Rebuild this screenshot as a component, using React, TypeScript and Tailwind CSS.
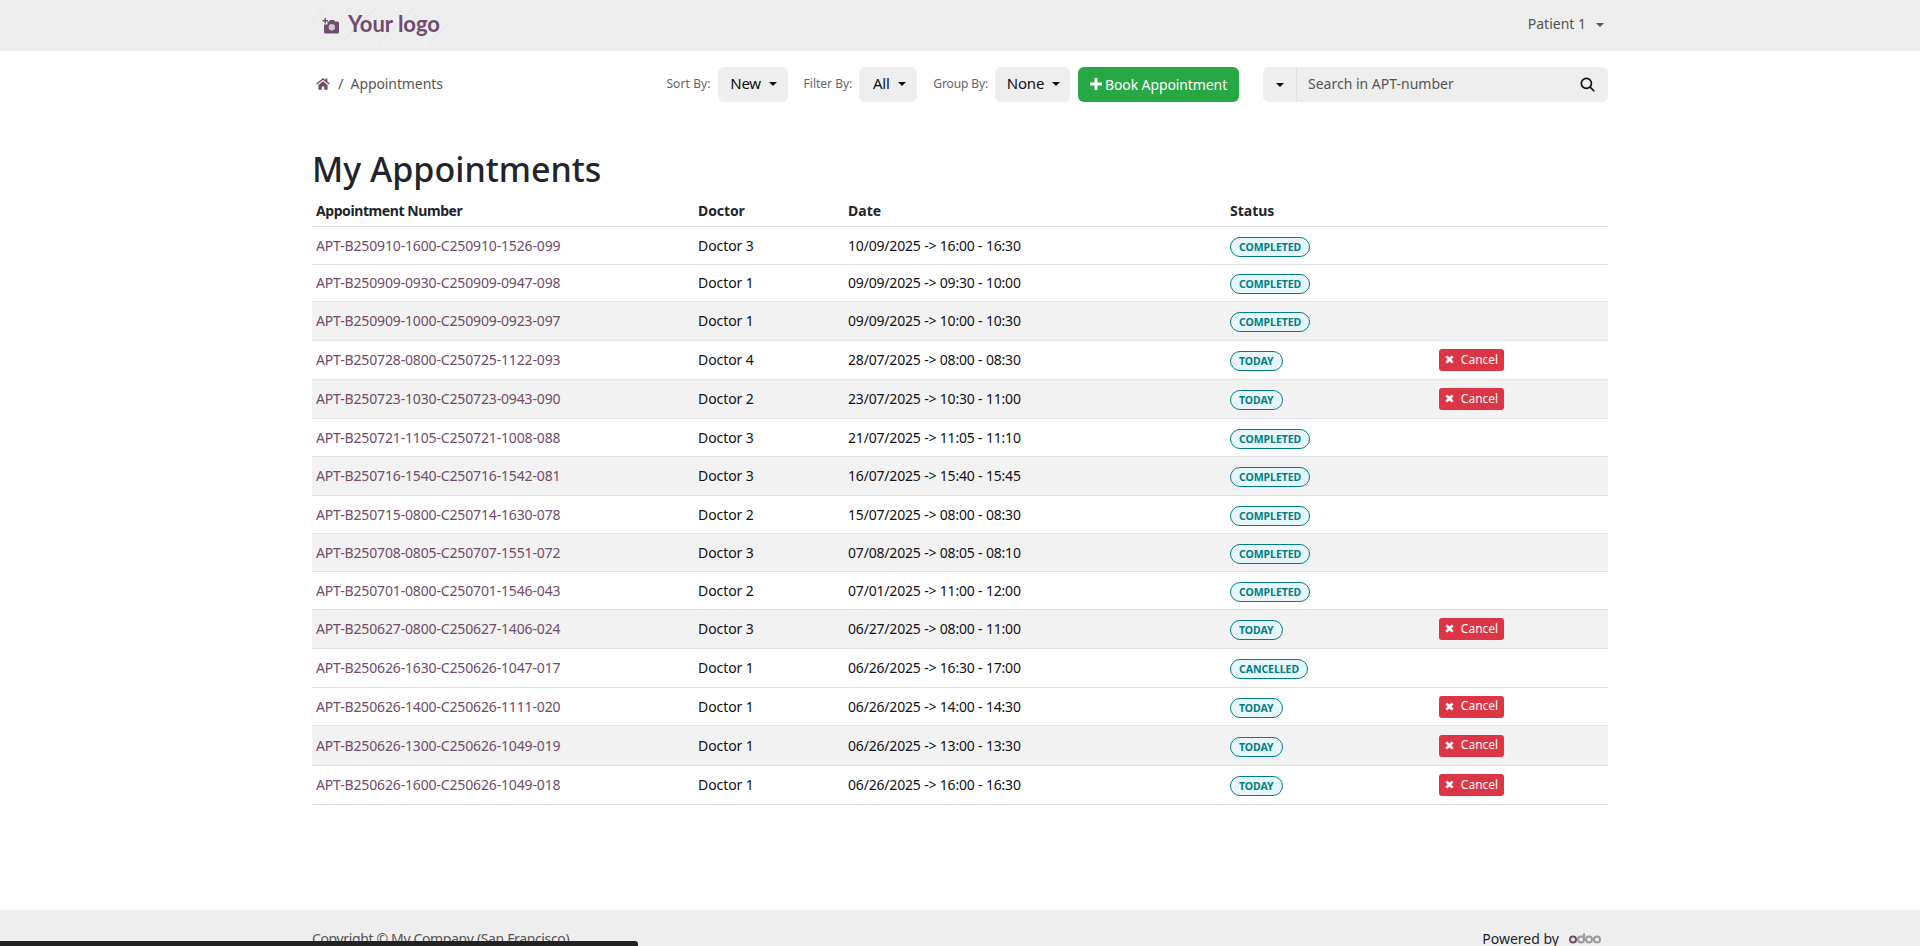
const rows = [
  { id: "APT-B250910-1600-C250910-1526-099", doctor: "Doctor 3", date: "10/09/2025 -> 16:00 - 16:30", status: "COMPLETED", h: 38 },
  { id: "APT-B250909-0930-C250909-0947-098", doctor: "Doctor 1", date: "09/09/2025 -> 09:30 - 10:00", status: "COMPLETED", h: 37 },
  { id: "APT-B250909-1000-C250909-0923-097", doctor: "Doctor 1", date: "09/09/2025 -> 10:00 - 10:30", status: "COMPLETED", h: 39, gray: true },
  { id: "APT-B250728-0800-C250725-1122-093", doctor: "Doctor 4", date: "28/07/2025 -> 08:00 - 08:30", status: "TODAY", h: 39 },
  { id: "APT-B250723-1030-C250723-0943-090", doctor: "Doctor 2", date: "23/07/2025 -> 10:30 - 11:00", status: "TODAY", h: 39, gray: true },
  { id: "APT-B250721-1105-C250721-1008-088", doctor: "Doctor 3", date: "21/07/2025 -> 11:05 - 11:10", status: "COMPLETED", h: 38 },
  { id: "APT-B250716-1540-C250716-1542-081", doctor: "Doctor 3", date: "16/07/2025 -> 15:40 - 15:45", status: "COMPLETED", h: 39, gray: true },
  { id: "APT-B250715-0800-C250714-1630-078", doctor: "Doctor 2", date: "15/07/2025 -> 08:00 - 08:30", status: "COMPLETED", h: 38 },
  { id: "APT-B250708-0805-C250707-1551-072", doctor: "Doctor 3", date: "07/08/2025 -> 08:05 - 08:10", status: "COMPLETED", h: 38, gray: true },
  { id: "APT-B250701-0800-C250701-1546-043", doctor: "Doctor 2", date: "07/01/2025 -> 11:00 - 12:00", status: "COMPLETED", h: 38 },
  { id: "APT-B250627-0800-C250627-1406-024", doctor: "Doctor 3", date: "06/27/2025 -> 08:00 - 11:00", status: "TODAY", h: 39, gray: true },
  { id: "APT-B250626-1630-C250626-1047-017", doctor: "Doctor 1", date: "06/26/2025 -> 16:30 - 17:00", status: "CANCELLED", h: 39 },
  { id: "APT-B250626-1400-C250626-1111-020", doctor: "Doctor 1", date: "06/26/2025 -> 14:00 - 14:30", status: "TODAY", h: 38 },
  { id: "APT-B250626-1300-C250626-1049-019", doctor: "Doctor 1", date: "06/26/2025 -> 13:00 - 13:30", status: "TODAY", h: 40, gray: true },
  { id: "APT-B250626-1600-C250626-1049-018", doctor: "Doctor 1", date: "06/26/2025 -> 16:00 - 16:30", status: "TODAY", h: 39 },
];

function Caret() {
  return <span className="ml-2 inline-block border-x-[4px] border-t-[4px] border-x-transparent border-t-current align-middle" />;
}

function Dropdown({ label, value, width, labelClass }: { label: string; value: string; width: string; labelClass: string }) {
  return (
    <div className="flex items-center gap-[7px]">
      <span className={`pb-[2px] text-[12px] text-[#666] ${labelClass}`}>{label}</span>
      <button className={`flex h-[35px] items-center justify-center rounded-[6px] bg-[#eeeeee] pb-[2px] pl-[2px] text-[15px] tracking-[-0.2px] text-[#111] ${width}`}>
        {value}
        <Caret />
      </button>
    </div>
  );
}

export default function App() {
  return (
    <div className="flex min-h-[946px] flex-col bg-white font-['Noto_Sans',sans-serif] text-[14px] text-[#212529]">
      <header className="h-[51px] bg-[#eeeeee]">
        <div className="mx-auto flex h-full w-[1296px] items-center justify-between pr-[4px]">
          <div className="flex h-[37px] w-[139px] items-center gap-[9px] bg-[repeating-linear-gradient(135deg,#e8e8e8_0,#e8e8e8_1px,transparent_1px,transparent_9px)] pl-[10px] text-[#6f4c70]">
            <svg viewBox="0 0 17 16" className="h-[16px] w-[17px]" fill="currentColor">
              <path d="M2.5 0h1.400v2H6v1.400H3.900v2H2.500v-2H.5V2h2z" />
              <path d="M5.500 3.500H7l1-1.500h4l1 1.500h2.500A1.500 1.500 0 0 1 17 5v9a1.500 1.500 0 0 1-1.500 1.500h-12A1.500 1.500 0 0 1 2 14V6.500h3.500z" />
              <circle cx="9.800" cy="9.200" r="3.200" fill="#c9c9c9" />
            </svg>
            <span className="pb-[3px] font-['Lato',sans-serif] text-[22px] font-bold leading-none">Your logo</span>
          </div>
          <span className="flex items-center pb-[5px] text-[14px] text-[#555]">
            Patient 1
            <span className="ml-[2px]">
              <Caret />
            </span>
          </span>
        </div>
      </header>

      <main className="mx-auto w-[1296px] flex-1">
        <div className="flex h-[67px] items-center">
          <div className="flex items-center pb-[2px] pl-[4px]">
            <svg viewBox="0 0 16 14" className="h-[13px] w-[14px] text-[#714b67]" fill="currentColor">
              <path d="M8 .6.3 7l1 1.200L8 2.700l6.700 5.500 1-1.200L13 4.800V1.200h-2.200v1.800zM2.800 8.800V14h3.800v-3.600h2.800V14h3.800V8.800L8 4.500z" />
            </svg>
            <span className="ml-[8px] mr-[7px] text-[15px] text-[#555]">/</span>
            <span className="text-[14px] tracking-[-0.1px] text-[#555]">Appointments</span>
          </div>
          <div className="ml-auto flex items-center gap-[8px]">
            <div className="flex items-center gap-[16px]">
              <Dropdown label="Sort By:" value="New" width="w-[70px]" labelClass="tracking-[0.1px]" />
              <Dropdown label="Filter By:" value="All" width="w-[58px]" labelClass="" />
              <Dropdown label="Group By:" value="None" width="w-[75px]" labelClass="tracking-[-0.12px]" />
            </div>
            <button className="flex h-[35px] w-[161px] items-center justify-center gap-[3px] rounded-[6px] bg-[#28a745] pb-[1px] text-[14px] tracking-[-0.1px] text-white">
              <svg viewBox="0 0 12 12" className="h-[12px] w-[12px]" fill="currentColor">
                <path d="M4.500 0h3v4.500H12v3H7.500V12h-3V7.500H0v-3h4.500z" />
              </svg>
              Book Appointment
            </button>
            <div className="ml-[16px] flex h-[35px] w-[345px] items-center rounded-[6px] bg-[#eeeeee]">
              <div className="flex h-full w-[34px] items-center justify-center border-r border-[#dee2e6]">
                <span className="inline-block border-x-[4px] border-t-[4px] border-x-transparent border-t-[#111]" />
              </div>
              <span className="flex-1 pb-[2px] pl-[11px] text-[14px] text-[#555]">Search in APT-number</span>
              <svg viewBox="0 0 16 16" className="mr-[13px] h-[15px] w-[15px] text-[#111]" fill="none" stroke="currentColor" strokeWidth="1.800">
                <circle cx="6.800" cy="6.800" r="5.400" />
                <path d="m10.800 10.800 4.400 4.400" />
              </svg>
            </div>
          </div>
        </div>

        <h1 className="mt-[31px] text-[34px] font-medium leading-[41px] text-[#212529]">My Appointments</h1>

        <table className="mt-[5px] w-full table-fixed border-collapse text-[14px]">
          <thead>
            <tr className="border-b border-[#dee2e6] text-left">
              <th className="w-[382px] px-[4px] py-[5px] font-bold tracking-[-0.42px]">Appointment Number</th>
              <th className="w-[150px] px-[4px] font-bold tracking-[-0.1px]">Doctor</th>
              <th className="w-[382px] px-[4px] font-bold">Date</th>
              <th className="w-[209px] px-[4px] font-bold">Status</th>
              <th />
            </tr>
          </thead>
          <tbody>
            {rows.map((r) => (
              <tr key={r.id} style={{ height: r.h }} className={`border-b border-[#dee2e6] ${r.gray ? "bg-[#f2f2f2]" : ""}`}>
                <td className="px-[4px] pb-[1px] tracking-[-0.15px]">
                  <a className="text-[#714b67]">{r.id}</a>
                </td>
                <td className="px-[4px] pb-[1px] tracking-[-0.08px] text-[#111]">{r.doctor}</td>
                <td className="px-[4px] pb-[1px] tracking-[-0.18px] text-[#111]">{r.date}</td>
                <td className="px-[4px]">
                  <span className="inline-block rounded-full border border-[#017e84] bg-[#e6f6fa] px-[8px] align-middle text-[10.5px] font-bold leading-[18px] tracking-[-0.05px] text-[#017e84]">
                    {r.status}
                  </span>
                </td>
                <td className="px-[4px]">
                  {r.status === "TODAY" && (
                    <button className="flex h-[22px] w-[65px] items-center justify-center gap-[7px] rounded-[3px] bg-[#dc3545] pb-[1px] text-[12px] text-white">
                      <svg viewBox="0 0 10 10" className="h-[9px] w-[9px]" fill="none" stroke="currentColor" strokeWidth="3">
                        <path d="m1.500 1.500 7 7M8.500 1.500l-7 7" />
                      </svg>
                      Cancel
                    </button>
                  )}
                </td>
              </tr>
            ))}
          </tbody>
        </table>
      </main>

      <footer className="relative h-[36px] overflow-hidden bg-[#eeeeee]">
        <div className="mx-auto flex w-[1296px] items-start justify-between pr-[7px] pt-[18px] text-[14px] text-[#555]">
          <span className="tracking-[-0.36px]">Copyright © My Company (San Francisco)</span>
          <span className="flex items-center text-[#212529]">
            Powered by
            <svg viewBox="0 0 32 11" className="ml-[10px] h-[11px] w-[32px]" fill="none" strokeWidth="2">
              <circle cx="4" cy="6.500" r="3" stroke="#714b67" />
              <circle cx="12" cy="6.500" r="3" stroke="#9a9a9a" />
              <path d="M15 0.500v6" stroke="#9a9a9a" />
              <circle cx="20" cy="6.500" r="3" stroke="#9a9a9a" />
              <circle cx="28" cy="6.500" r="3" stroke="#9a9a9a" />
            </svg>
          </span>
        </div>
        <div className="absolute bottom-0 left-0 h-[5px] w-[638px] rounded-tr-[3px] bg-[#212121]" />
      </footer>
    </div>
  );
}
